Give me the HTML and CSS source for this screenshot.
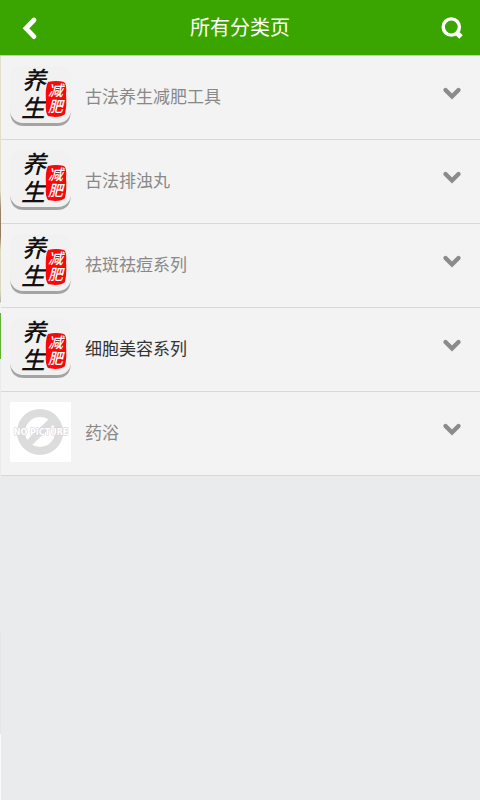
FILE: index.html
```html
<!DOCTYPE html>
<html lang="zh-CN">
<head>
<meta charset="utf-8">
<meta name="viewport" content="width=device-width, initial-scale=1">
<title>所有分类页</title>
<link rel="stylesheet" href="styles.css">
</head>
<body>
<svg class="defs" aria-hidden="true">
  <defs>
    <linearGradient id="lip" x1="0" y1="0" x2="0" y2="1">
      <stop offset="0" stop-color="#dedede"/>
      <stop offset="0.5" stop-color="#a4a4a4"/>
      <stop offset="1" stop-color="#a4a4a4"/>
    </linearGradient>
    <symbol id="brand" viewBox="0 0 61 60">
      <path d="M0 43V46Q1 60 14 60H47Q60 60 61 46V43Z" fill="url(#lip)"/>
      <rect width="61" height="57" rx="13" fill="#f1f1f1"/>
      <text class="ink" x="12" y="23">养</text>
      <text class="ink" x="11" y="51">生</text>
      <path d="M38 16Q46 14 54 16Q57 18 56 28Q57 39 55 48Q52 51 45 51L38 50Q35 46 36 36Q35 21 38 16Z" fill="#fa0808"/>
      <text class="seal" x="38" y="30">减</text>
      <text class="seal" x="38" y="46">肥</text>
    </symbol>
    <symbol id="empty" viewBox="0 0 61 60">
      <rect width="61" height="60" fill="#fff"/>
      <circle cx="30" cy="30" r="19" fill="none" stroke="#dcdcdc" stroke-width="8"/>
      <path d="M17 43L43 18" stroke="#dcdcdc" stroke-width="7"/>
      <text class="nopic" x="31" y="33" text-anchor="middle">NO PICTURE</text>
    </symbol>
    <symbol id="down" viewBox="0 0 20 16">
      <path d="M3.5 4L10 10.5L16.5 4" fill="none" stroke="#8b8b8b" stroke-width="4.4" stroke-linecap="round"/>
    </symbol>
  </defs>
</svg>
<header class="bar">
  <button class="bar-button" type="button" aria-label="返回">
    <svg width="20" height="24" viewBox="0 0 20 24" aria-hidden="true"><path d="M14 4L6 12.3L14 20.6" fill="none" stroke="#fff" stroke-width="4.8" stroke-linecap="round"/></svg>
  </button>
  <h1 class="title">所有分类页</h1>
  <button class="bar-button" type="button" aria-label="搜索">
    <svg width="24" height="24" viewBox="0 0 24 24" aria-hidden="true"><circle cx="11.3" cy="11" r="8.1" fill="none" stroke="#fff" stroke-width="3.4"/><path d="M16 16L21 21" stroke="#fff" stroke-width="5"/></svg>
  </button>
</header>
<main class="page">
  <ul class="list">
    <li><button class="row" type="button"><svg class="thumb" aria-hidden="true"><use href="#brand"/></svg><span class="name">古法养生减肥工具</span><svg class="chevron" aria-hidden="true"><use href="#down"/></svg></button></li>
    <li><button class="row" type="button"><svg class="thumb" aria-hidden="true"><use href="#brand"/></svg><span class="name">古法排浊丸</span><svg class="chevron" aria-hidden="true"><use href="#down"/></svg></button></li>
    <li><button class="row" type="button"><svg class="thumb" aria-hidden="true"><use href="#brand"/></svg><span class="name">祛斑祛痘系列</span><svg class="chevron" aria-hidden="true"><use href="#down"/></svg></button></li>
    <li><button class="row active" type="button"><svg class="thumb" aria-hidden="true"><use href="#brand"/></svg><span class="name">细胞美容系列</span><svg class="chevron" aria-hidden="true"><use href="#down"/></svg></button></li>
    <li><button class="row" type="button"><svg class="thumb" aria-hidden="true"><use href="#empty"/></svg><span class="name">药浴</span><svg class="chevron" aria-hidden="true"><use href="#down"/></svg></button></li>
  </ul>
</main>
</body>
</html>
```
FILE: styles.css
```css
* {
  box-sizing: border-box;
}

body {
  margin: 0;
  min-height: 100vh;
  display: flex;
  flex-direction: column;
  font-family: "Noto Sans CJK SC", sans-serif;
  /* sliver of the underlying page along the left edge */
  background: linear-gradient(#e2e0cc 0 190px, #9a8268 210px, #93785e 236px, #dcd8bc 250px 290px, #b5b5ae 302px, #f3f3f3 303px 313px, #62b236 313px 359px, #eaebed 359px 632px, #e4e6e8 632px 734px, #fafafa 734px);
}

button {
  margin: 0;
  border: 0;
  background: none;
  font: inherit;
  color: inherit;
  cursor: pointer;
}

.defs {
  position: absolute;
  width: 0;
  height: 0;
}

.bar {
  display: flex;
  align-items: center;
  justify-content: space-between;
  height: 56px;
  padding: 0 16px;
  background: #3ba500;
  border-bottom: 1px solid #b5d99f;
  color: #fff;
}

.bar-button {
  display: flex;
  padding: 4px 0;
}

.bar-button:first-child {
  padding-left: 4px;
}

.title {
  margin: 0;
  padding-bottom: 2px;
  font-size: 20px;
  line-height: 28px;
  font-weight: 400;
}

.page {
  flex: 1;
  margin-left: 1px;
  background: #eaebed;
}

.list {
  margin: 0;
  padding: 0;
  list-style: none;
}

.row {
  display: flex;
  align-items: center;
  gap: 14px;
  width: 100%;
  height: 84px;
  padding: 0 18px 4px 9px;
  background: #f3f3f3;
  border-bottom: 1px solid #d8d8d8;
  color: #888;
  text-align: left;
}

.row.active {
  color: #333;
}

.thumb {
  flex: none;
  width: 61px;
  height: 60px;
}

.name {
  flex: 1;
  font-size: 17px;
  line-height: 24px;
}

.chevron {
  flex: none;
  width: 20px;
  height: 16px;
  margin-bottom: 4px;
}

.ink {
  font: italic 500 24px "Noto Sans CJK SC", sans-serif;
  fill: #111;
}

.seal {
  font: italic 500 15px "Noto Sans CJK SC", sans-serif;
  fill: #fff;
}

.nopic {
  font: 700 8px "DejaVu Sans", sans-serif;
  fill: #fff;
  stroke: #d4d4d4;
  stroke-width: 1px;
  paint-order: stroke;
}
```
